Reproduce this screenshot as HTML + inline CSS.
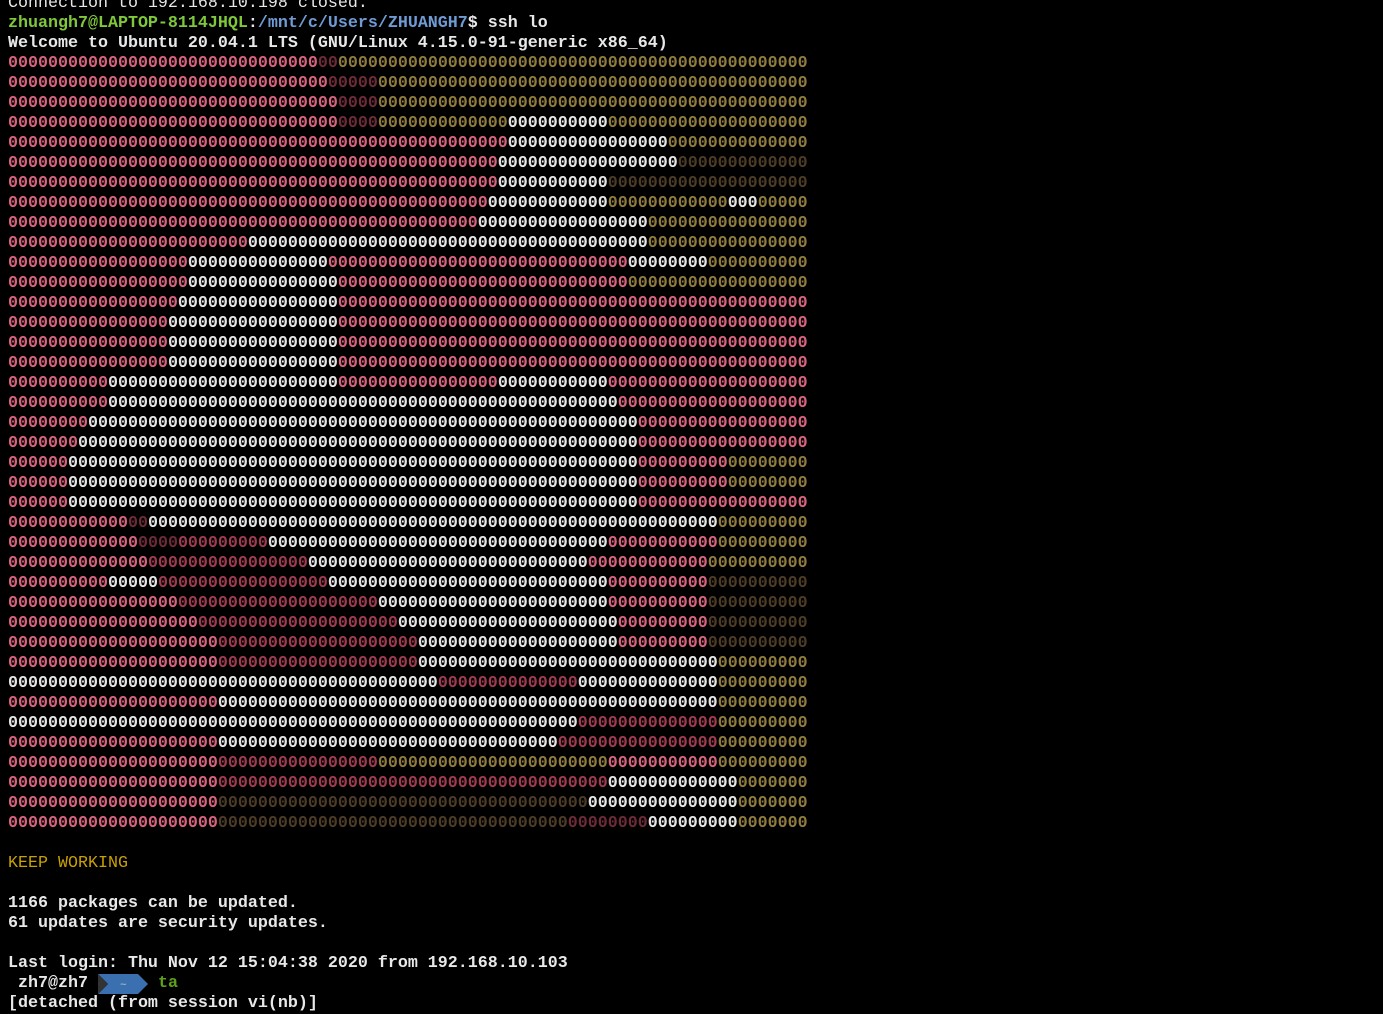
<!DOCTYPE html>
<html><head><meta charset="utf-8"><style>
html,body{margin:0;background:#000;width:1383px;height:1001px;overflow:hidden}
#t{position:absolute;left:8px;top:-6px;font-family:"Liberation Mono",monospace;font-size:16.67px;line-height:20px;color:#e8e8e8;font-weight:bold}
#t div{height:20px;white-space:pre}
i{font-style:normal}
.p{color:#d9647e}.w{color:#e6e6e6}.o{color:#8f7c3e}.r{color:#a03c50}.k{color:#6e2c38}.d{color:#4e3d26}
.g{color:#7ec83a}.b{color:#6f9bd4}.y{color:#c9a000}.gr{color:#5ea01a}
.arr{display:inline-block;position:relative;vertical-align:top;height:20px}
</style></head><body><div id="t">
<div style="font-weight:normal">Connection to 192.168.10.198 closed.</div>
<div><i class="g">zhuangh7@LAPTOP-8114JHQL</i>:<i class="b">/mnt/c/Users/ZHUANGH7</i>$ ssh lo</div>
<div>Welcome to Ubuntu 20.04.1 LTS (GNU/Linux 4.15.0-91-generic x86_64)</div>
<div><i class="p">0000000000000000000000000000000</i><i class="k">00</i><i class="o">00000000000000000000000000000000000000000000000</i></div>
<div><i class="p">00000000000000000000000000000000</i><i class="k">00000</i><i class="o">0000000000000000000000000000000000000000000</i></div>
<div><i class="p">000000000000000000000000000000000</i><i class="k">0000</i><i class="o">0000000000000000000000000000000000000000000</i></div>
<div><i class="p">000000000000000000000000000000000</i><i class="k">0000</i><i class="o">0000000000000</i><i class="w">0000000000</i><i class="o">00000000000000000000</i></div>
<div><i class="p">00000000000000000000000000000000000000000000000000</i><i class="w">0000000000000000</i><i class="o">00000000000000</i></div>
<div><i class="p">0000000000000000000000000000000000000000000000000</i><i class="w">000000000000000000</i><i class="d">0000000000000</i></div>
<div><i class="p">0000000000000000000000000000000000000000000000000</i><i class="w">00000000000</i><i class="d">00000000000000000000</i></div>
<div><i class="p">000000000000000000000000000000000000000000000000</i><i class="w">000000000000</i><i class="o">000000000000</i><i class="w">000</i><i class="o">00000</i></div>
<div><i class="p">00000000000000000000000000000000000000000000000</i><i class="w">00000000000000000</i><i class="o">0000000000000000</i></div>
<div><i class="p">000000000000000000000000</i><i class="w">0000000000000000000000000000000000000000</i><i class="o">0000000000000000</i></div>
<div><i class="p">000000000000000000</i><i class="w">00000000000000</i><i class="p">000000000000000000000000000000</i><i class="w">00000000</i><i class="o">0000000000</i></div>
<div><i class="p">000000000000000000</i><i class="w">000000000000000</i><i class="p">00000000000000000000000000000</i><i class="o">000000000000000000</i></div>
<div><i class="p">00000000000000000</i><i class="w">0000000000000000</i><i class="p">00000000000000000000000000000000000000000000000</i></div>
<div><i class="p">0000000000000000</i><i class="w">00000000000000000</i><i class="p">00000000000000000000000000000000000000000000000</i></div>
<div><i class="p">0000000000000000</i><i class="w">00000000000000000</i><i class="p">00000000000000000000000000000000000000000000000</i></div>
<div><i class="p">0000000000000000</i><i class="w">00000000000000000</i><i class="p">00000000000000000000000000000000000000000000000</i></div>
<div><i class="p">0000000000</i><i class="w">00000000000000000000000</i><i class="p">0000000000000000</i><i class="w">00000000000</i><i class="p">00000000000000000000</i></div>
<div><i class="p">0000000000</i><i class="w">000000000000000000000000000000000000000000000000000</i><i class="p">0000000000000000000</i></div>
<div><i class="p">00000000</i><i class="w">0000000000000000000000000000000000000000000000000000000</i><i class="p">00000000000000000</i></div>
<div><i class="p">0000000</i><i class="w">00000000000000000000000000000000000000000000000000000000</i><i class="p">00000000000000000</i></div>
<div><i class="p">000000</i><i class="w">000000000000000000000000000000000000000000000000000000000</i><i class="p">000000000</i><i class="o">00000000</i></div>
<div><i class="p">000000</i><i class="w">000000000000000000000000000000000000000000000000000000000</i><i class="p">000000000</i><i class="o">00000000</i></div>
<div><i class="p">000000</i><i class="w">000000000000000000000000000000000000000000000000000000000</i><i class="p">00000000000000000</i></div>
<div><i class="p">000000000000</i><i class="k">00</i><i class="w">000000000000000000000000000000000000000000000000000000000</i><i class="o">000000000</i></div>
<div><i class="p">0000000000000</i><i class="k">0000</i><i class="r">000000000</i><i class="w">0000000000000000000000000000000000</i><i class="p">00000000000</i><i class="o">000000000</i></div>
<div><i class="p">00000000000000</i><i class="r">0000000000000000</i><i class="w">0000000000000000000000000000</i><i class="p">000000000000</i><i class="o">0000000000</i></div>
<div><i class="p">0000000000</i><i class="w">00000</i><i class="r">00000000000000000</i><i class="w">0000000000000000000000000000</i><i class="p">0000000000</i><i class="d">0000000000</i></div>
<div><i class="p">00000000000000000</i><i class="r">00000000000000000000</i><i class="w">00000000000000000000000</i><i class="p">0000000000</i><i class="d">0000000000</i></div>
<div><i class="p">0000000000000000000</i><i class="r">00000000000000000000</i><i class="w">0000000000000000000000</i><i class="p">000000000</i><i class="d">0000000000</i></div>
<div><i class="p">000000000000000000000</i><i class="r">00000000000000000000</i><i class="w">00000000000000000000</i><i class="p">000000000</i><i class="d">0000000000</i></div>
<div><i class="p">000000000000000000000</i><i class="r">00000000000000000000</i><i class="w">000000000000000000000000000000</i><i class="o">000000000</i></div>
<div><i class="w">0000000000000000000000000000000000000000000</i><i class="r">00000000000000</i><i class="w">00000000000000</i><i class="o">000000000</i></div>
<div><i class="p">000000000000000000000</i><i class="w">00000000000000000000000000000000000000000000000000</i><i class="o">000000000</i></div>
<div><i class="w">000000000000000000000000000000000000000000000000000000000</i><i class="r">00000000000000</i><i class="o">000000000</i></div>
<div><i class="p">000000000000000000000</i><i class="w">0000000000000000000000000000000000</i><i class="r">0000000000000000</i><i class="o">000000000</i></div>
<div><i class="p">000000000000000000000</i><i class="r">0000000000000000</i><i class="o">00000000000000000000000</i><i class="p">00000000000</i><i class="o">000000000</i></div>
<div><i class="p">000000000000000000000</i><i class="r">000000000000000000000000000000000000000</i><i class="w">0000000000000</i><i class="o">0000000</i></div>
<div><i class="p">000000000000000000000</i><i class="d">0000000000000000000000000000000000000</i><i class="w">000000000000000</i><i class="o">0000000</i></div>
<div><i class="p">000000000000000000000</i><i class="d">00000000000000000000000000000000000</i><i class="k">00000000</i><i class="w">000000000</i><i class="o">0000000</i></div>
<div></div>
<div class="y" style="font-weight:normal">KEEP WORKING</div>
<div></div>
<div>1166 packages can be updated.</div>
<div>61 updates are security updates.</div>
<div></div>
<div>Last login: Thu Nov 12 15:04:38 2020 from 192.168.10.103</div>
<div> zh7@zh7 <span class="arr" style="width:50px"><svg width="50" height="20" style="position:absolute;left:0;top:0"><polygon points="0,0 40,0 50,10 40,20 0,20 10,10" fill="#3a6fb0"/><polygon points="0,0 10,10 0,20" fill="#333"/><text x="22" y="14" fill="#9ab" font-size="11" font-family="Liberation Mono">~</text></svg></span> <i class="gr">ta</i></div>
<div>[detached (from session vi(nb)]</div>
</div></body></html>
